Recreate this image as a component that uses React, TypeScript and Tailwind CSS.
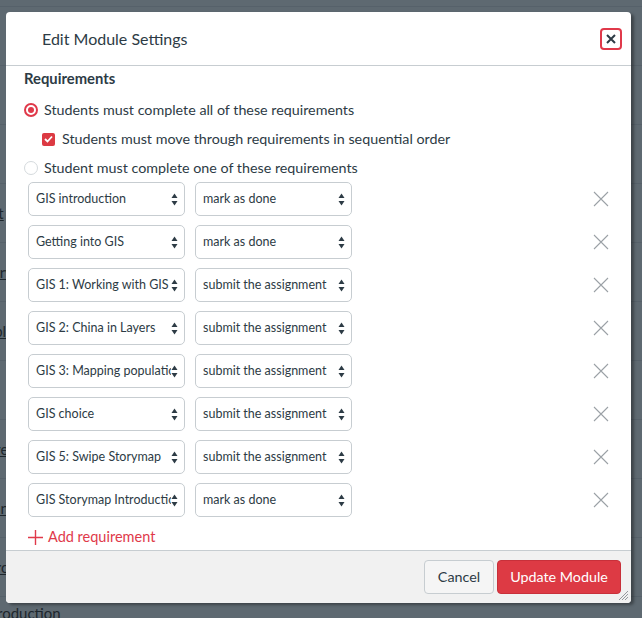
import React from "react";

const rows: [string, string][] = [
  ["GIS introduction", "mark as done"],
  ["Getting into GIS", "mark as done"],
  ["GIS 1: Working with GIS", "submit the assignment"],
  ["GIS 2: China in Layers", "submit the assignment"],
  ["GIS 3: Mapping population density", "submit the assignment"],
  ["GIS choice", "submit the assignment"],
  ["GIS 5: Swipe Storymap", "submit the assignment"],
  ["GIS Storymap Introduction", "mark as done"],
];

const bgRows: string[] = ["", "", "", "Edit", "Story", "Explo", "", "Layer", "Lean", "Intro/", ""];

function Arrows() {
  return (
    <svg width="7" height="13" viewBox="0 0 7 13" className="shrink-0">
      <path d="M3.5 0.5 L6.5 5 L0.5 5 Z" fill="#2d3b45" />
      <path d="M3.5 12.5 L6.5 8 L0.5 8 Z" fill="#2d3b45" />
    </svg>
  );
}

function Select({ value, width }: { value: string; width: string }) {
  return (
    <div
      className={`${width} h-[34px] shrink-0 flex items-center border border-[#c7cdd1] rounded-[5px] bg-white pl-[7px] pr-[6px]`}
    >
      <div className="flex-1 overflow-hidden whitespace-nowrap text-[12.5px] text-[#2d3b45] leading-none">
        {value}
      </div>
      <Arrows />
    </div>
  );
}

function XIcon() {
  return (
    <svg width="16" height="16" viewBox="0 0 16 16">
      <path d="M1 1 L15 15 M15 1 L1 15" stroke="#9ba1a6" strokeWidth="1.1" fill="none" />
    </svg>
  );
}

export default function App() {
  return (
    <div
      className="w-[642px] h-[618px] relative overflow-hidden bg-[#5e6971]"
      style={{ fontFamily: "Lato, 'Noto Sans', sans-serif" }}
    >
      {/* background page */}
      <div className="flex flex-col">
        <div className="h-[7px] border-b border-[#56616a]" />
        {bgRows.map((t, i) => (
          <div
            key={i}
            className="h-[59px] border-b border-[#56616a] flex items-center"
          >
            <span className="-ml-[22px] text-[15px] underline text-[#1d262c]">{t}</span>
          </div>
        ))}
      </div>
      <div className="absolute left-[-3px] top-[602px] text-[15px] text-[#1d262c]">roduction</div>

      {/* modal */}
      <div className="absolute left-[6px] top-[12px] w-[625px] h-[591px] bg-white rounded-[4px] flex flex-col overflow-hidden shadow-[3px_2px_3px_rgba(0,0,0,0.35)]">
        {/* header */}
        <div className="h-[54px] shrink-0 border-b border-[#c7cdd1] flex items-center pl-[36px] pr-[9px]">
          <div className="flex-1 text-[16px] text-[#2d3b45]">Edit Module Settings</div>
          <div className="w-[22px] h-[22px] border-2 border-[#e0394a] rounded-[4px] flex items-center justify-center">
            <svg width="10" height="10" viewBox="0 0 10 10">
              <path d="M1 1 L9 9 M9 1 L1 9" stroke="#2d3b45" strokeWidth="2" fill="none" />
            </svg>
          </div>
        </div>

        {/* body */}
        <div className="flex-1 flex flex-col pl-[18px] pr-[15px] pt-[2px]">
          <div className="h-[20px] flex items-center text-[14.8px] font-bold text-[#2d3b45]">Requirements</div>

          <div className="mt-[10px] h-[24px] flex items-center gap-[6px]">
            <div className="w-[14px] h-[14px] rounded-full border-2 border-[#e0394a] flex items-center justify-center">
              <div className="w-[6px] h-[6px] rounded-full bg-[#e0394a]" />
            </div>
            <span className="text-[14.3px] text-[#2d3b45]">Students must complete all of these requirements</span>
          </div>

          <div className="mt-[5px] h-[24px] flex items-center gap-[7px] pl-[18px]">
            <div className="w-[13px] h-[13px] rounded-[2px] bg-[#dc3a43] flex items-center justify-center">
              <svg width="9" height="8" viewBox="0 0 9 8">
                <path d="M1 4 L3.5 6.5 L8 1.5" stroke="white" strokeWidth="1.8" fill="none" />
              </svg>
            </div>
            <span className="text-[14.3px] text-[#2d3b45]">Students must move through requirements in sequential order</span>
          </div>

          <div className="mt-[5px] h-[24px] flex items-center gap-[6px]">
            <div className="w-[14px] h-[14px] rounded-full border border-[#d5dadd]" />
            <span className="text-[14.3px] text-[#2d3b45]">Student must complete one of these requirements</span>
          </div>

          <div className="mt-[2px] flex flex-col gap-[9px] pl-[4px]">
            {rows.map(([a, b], i) => (
              <div key={i} className="flex items-center">
                <Select value={a} width="w-[157px]" />
                <div className="w-[10px]" />
                <Select value={b} width="w-[157px]" />
                <div className="flex-1" />
                <div className="mr-[7px]">
                  <XIcon />
                </div>
              </div>
            ))}
          </div>

          <div className="mt-[9px] h-[22px] flex items-center gap-[5px] pl-[4px]">
            <svg width="15" height="15" viewBox="0 0 15 15">
              <path d="M7.5 0 L7.5 15 M0 7.5 L15 7.5" stroke="#e0394a" strokeWidth="1.4" fill="none" />
            </svg>
            <span className="text-[14.5px] text-[#e0394a]">Add requirement</span>
          </div>
        </div>

        {/* footer */}
        <div className="h-[53px] shrink-0 border-t border-[#c7cdd1] bg-[#f1f1f1] flex items-start justify-end pt-[9px] pr-[10px] gap-[3px] relative">
          <div className="w-[70px] h-[34px] border border-[#c7cdd1] rounded-[4px] bg-[#f5f5f5] flex items-center justify-center text-[14.3px] text-[#2d3b45]">
            Cancel
          </div>
          <div className="w-[124px] h-[34px] border border-[#c8303a] rounded-[4px] bg-[#dd3a44] flex items-center justify-center text-[14.3px] text-white">
            Update Module
          </div>
          <svg width="11" height="11" viewBox="0 0 11 11" className="absolute right-[2px] bottom-[2px]">
            <path d="M10 1 L1 10 M10 4 L4 10 M10 7 L7 10" stroke="#8a8f93" strokeWidth="0.9" fill="none" />
          </svg>
        </div>
      </div>
    </div>
  );
}
